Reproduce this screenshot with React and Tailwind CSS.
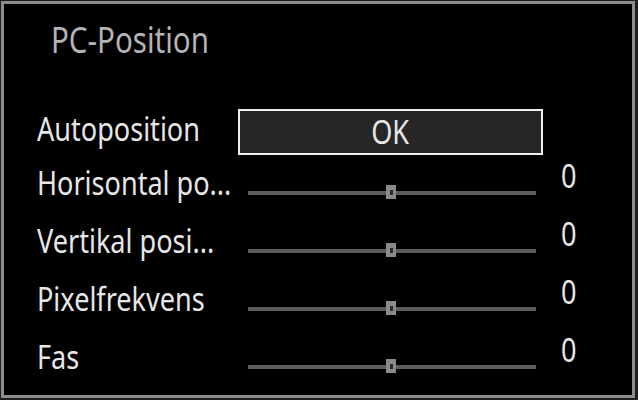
import React from 'react';

// PC-Position menu (TV OSD)
const rows = [
  { label: 'Horisontal po...', value: 0 },
  { label: 'Vertikal posi...', value: 0 },
  { label: 'Pixelfrekvens', value: 0 },
  { label: 'Fas', value: 0 },
];

// OSD font is very condensed; no narrow face installed, so squeeze horizontally
const squeeze = 'inline-block origin-left scale-x-[0.82] whitespace-nowrap';

function Slider() {
  return (
    <div className="relative w-[288px] h-[4px] bg-[#5c5c5c] mt-[36px]">
      <div className="absolute left-[138px] top-[-6px] w-[10px] h-[14px] bg-[#8a8a8a] flex items-center justify-center">
        <div className="w-[3px] h-[5px] bg-[#2a2a2a]" />
      </div>
    </div>
  );
}

export default function App() {
  return (
    <div
      className="w-[638px] h-[400px] bg-[#1e1e1e] pl-[1px] pt-[1px]"
      style={{ fontFamily: '"Noto Sans", "Open Sans", sans-serif' }}
    >
      <div className="w-[634px] h-[397px] border-[3px] border-[#8c8c8c] bg-black">
        <div className="pl-[47px] pt-[14px] text-[36px] leading-[44px] text-[#b4b4b4]">
          <span className={squeeze}>PC-Position</span>
        </div>

        <div className="mt-[47px] pl-[33px]">
          <div className="flex items-center h-[46px]">
            <div className="w-[201px] text-[33px] leading-[40px] text-[#e6e6e6] mt-[-6px]">
              <span className={squeeze}>Autoposition</span>
            </div>
            <div className="w-[305px] h-[46px] border-[2px] border-[#f0f0f0] bg-[#262626] flex items-center justify-center text-[33px] text-[#e6e6e6]">
              <span className="inline-block scale-x-[0.82]">OK</span>
            </div>
          </div>

          {rows.map((r) => (
            <div key={r.label} className="flex items-start h-[58px] first:mt-[11px]">
              <div className="w-[211px] text-[33px] leading-[40px] text-[#e6e6e6] pt-[8px]">
                <span className={squeeze}>{r.label}</span>
              </div>
              <Slider />
              <div className="ml-[25px] text-[33px] leading-[40px] text-[#e6e6e6] pt-[1px]">
                <span className={squeeze}>{r.value}</span>
              </div>
            </div>
          ))}
        </div>
      </div>
    </div>
  );
}
